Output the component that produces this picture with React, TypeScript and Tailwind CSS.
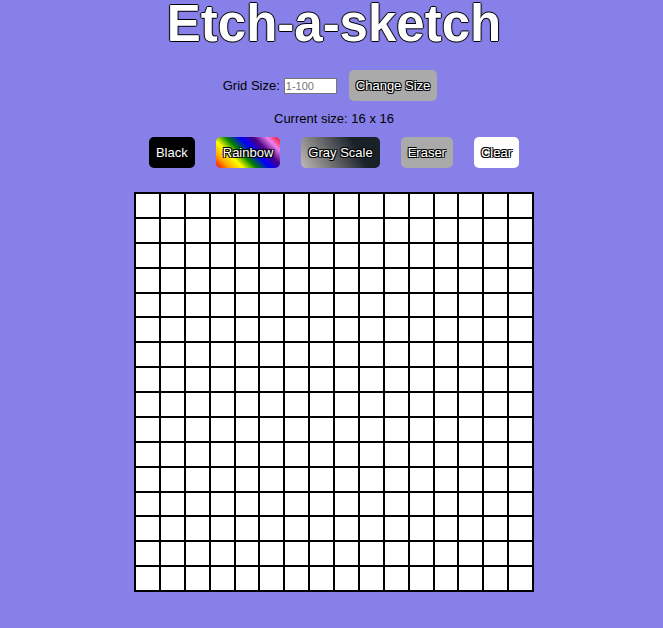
import { useState } from "react";

const buttonBase =
  "h-[31px] rounded-[5px] px-[7px] text-[13px] leading-4 text-white [text-shadow:-1px_-1px_0_#000,1px_-1px_0_#000,-1px_1px_0_#000,1px_1px_0_#000]";

const modes = [
  { label: "Black", look: "bg-black" },
  {
    label: "Rainbow",
    look: "bg-[linear-gradient(45deg,red,orange,yellow,green,blue,indigo,violet,red)]",
  },
  {
    label: "Gray Scale",
    look: "bg-[linear-gradient(60deg,#c0bab5,#192129_70%)]",
  },
  { label: "Eraser", look: "bg-[#aaaaaa]" },
];

export default function App() {
  const [size, setSize] = useState(16);
  const [draft, setDraft] = useState("");
  const [mode, setMode] = useState("Black");
  const [cells, setCells] = useState<Record<number, string>>({});

  const changeSize = () => {
    const next = Number(draft);
    if (next >= 1 && next <= 100) {
      setSize(Math.floor(next));
      setCells({});
    }
  };

  const paint = (index: number) => {
    const colors: Record<string, string> = {
      Black: "#000",
      Rainbow: `hsl(${Math.floor(Math.random() * 360)} 100% 50%)`,
      "Gray Scale": "#777",
      Eraser: "#fff",
    };
    setCells((old) => ({ ...old, [index]: colors[mode] }));
  };

  return (
    <main className="flex min-h-screen flex-col items-center bg-[#8780e8] pl-[5px] font-['Liberation_Sans',Arial,sans-serif] text-[13px] leading-4 text-black">
      <h1 className="text-[51px] leading-[48px] font-bold text-white [text-shadow:-1px_0_1px_#000,1px_0_1px_#000,0_-1px_0_#000,0_1px_0_#000]">
        Etch-a-sketch
      </h1>
      <div className="mt-[22px] mr-2 flex items-center">
        <label htmlFor="grid-size">Grid Size:</label>
        <input
          id="grid-size"
          type="text"
          placeholder="1-100"
          value={draft}
          onChange={(e) => setDraft(e.target.value)}
          className="mr-3 ml-1 h-4 w-[53px] border border-[#767676] bg-white px-px text-[11px] placeholder:text-[#757575]"
        />
        <button type="button" onClick={changeSize} className={`${buttonBase} bg-[#aaaaaa]`}>
          Change Size
        </button>
      </div>
      <p className="mt-[10px]">Current size: {size} x {size}</p>
      <div className="mt-[10px] flex gap-[21px]">
        {modes.map(({ label, look }) => (
          <button
            key={label}
            type="button"
            onClick={() => setMode(label)}
            className={`${buttonBase} ${look}`}
          >
            {label}
          </button>
        ))}
        <button type="button" onClick={() => setCells({})} className={`${buttonBase} bg-white`}>
          Clear
        </button>
      </div>
      <div
        className="mt-6 mb-9 grid aspect-square w-[400px] border border-black bg-white"
        style={{
          gridTemplateColumns: `repeat(${size}, minmax(0, 1fr))`,
          gridTemplateRows: `repeat(${size}, minmax(0, 1fr))`,
        }}
      >
        {Array.from({ length: size * size }, (_, i) => (
          <div
            key={i}
            onMouseEnter={() => paint(i)}
            className="border border-black"
            style={{ backgroundColor: cells[i] }}
          />
        ))}
      </div>
    </main>
  );
}
